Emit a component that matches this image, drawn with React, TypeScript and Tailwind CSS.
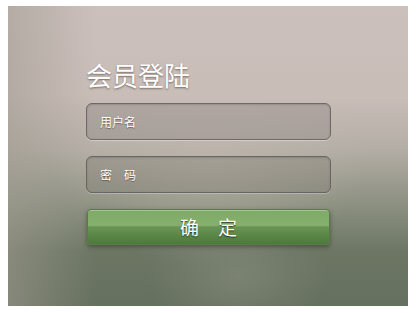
import React from "react";

export default function App() {
  return (
    <div className="w-[417px] h-[313px] bg-white pt-[6px] pl-[8px]" style={{ fontFamily: '"Noto Sans CJK SC", "Noto Sans", sans-serif' }}>
      <div className="relative w-[400px] h-[300px] overflow-hidden bg-[linear-gradient(180deg,#ccc0bc_0%,#c9bdb8_30%,#b3ada5_48%,#8e9283_65%,#6c7663_82%,#66705e_100%)]">
        <div className="absolute inset-0 bg-[radial-gradient(ellipse_160px_110px_at_200px_150px,rgba(200,190,180,0.45),rgba(200,190,180,0)_100%)]" />
        <div className="absolute inset-0 bg-[linear-gradient(90deg,rgba(160,155,145,0.55)_0%,rgba(160,155,145,0)_22%,rgba(160,155,145,0)_100%)]" />
        <div className="absolute inset-0 bg-[radial-gradient(ellipse_90px_60px_at_230px_270px,rgba(140,145,130,0.5),rgba(140,145,130,0)_100%)]" />
        <div className="relative pl-[78px] pt-[56px] flex flex-col">
          <div className="text-[26px] leading-[26px] text-white tracking-[0px] [text-shadow:0_1px_2px_rgba(60,50,50,0.6)]">会员登陆</div>
          <div className="mt-[15px] w-[245px] h-[37px] rounded-[6px] border border-[#6e6868] bg-[rgba(120,112,110,0.28)] shadow-[inset_0_1px_2px_rgba(0,0,0,0.15),0_1px_0_rgba(255,255,255,0.35)] flex items-center pl-[13px] text-[12px] text-white [text-shadow:0_1px_1px_rgba(0,0,0,0.4)]">用户名</div>
          <div className="mt-[16px] w-[245px] h-[37px] rounded-[6px] border border-[#686664] bg-[rgba(110,106,100,0.28)] shadow-[inset_0_1px_2px_rgba(0,0,0,0.15),0_1px_0_rgba(255,255,255,0.25)] flex items-center pl-[13px] text-[12px] text-white [text-shadow:0_1px_1px_rgba(0,0,0,0.4)] whitespace-pre">密　码</div>
          <div className="mt-[16px] ml-[1px] w-[243px] h-[36px] rounded-[4px] border border-[#5a7a4a] bg-[linear-gradient(180deg,#7fa968_0%,#86b06c_45%,#6a9455_50%,#5a8646_75%,#4d7a3b_100%)] shadow-[0_2px_4px_rgba(40,40,30,0.5),inset_0_1px_0_rgba(255,255,255,0.3)] flex items-center justify-center text-[19px] text-white [text-shadow:0_1px_1px_rgba(0,0,0,0.6)] whitespace-pre">确　定</div>
        </div>
      </div>
    </div>
  );
}
